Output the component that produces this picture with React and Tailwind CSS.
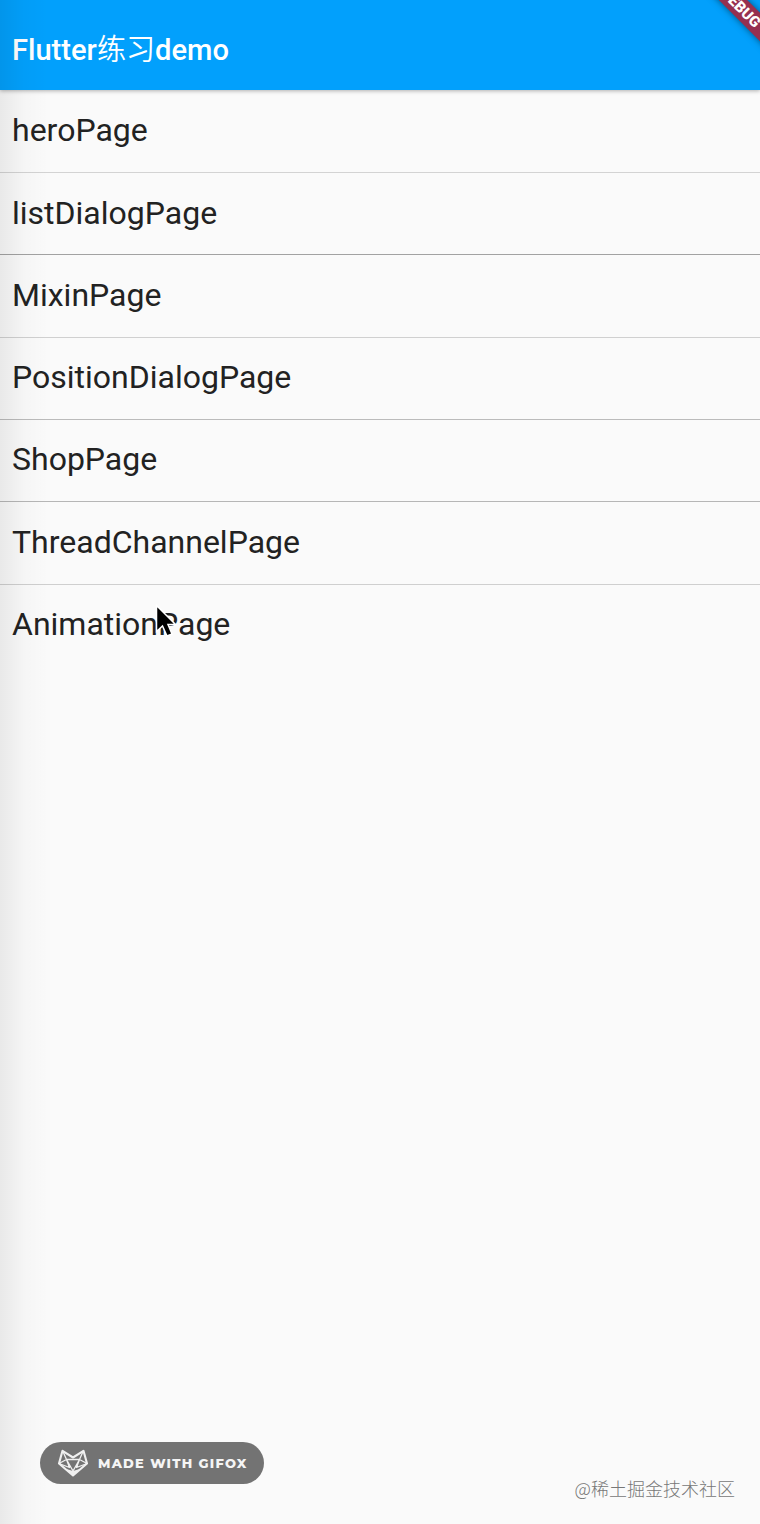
const rows = [
  { name: 'heroPage', box: 'h-[82px] border-[#d3d3d3] pt-[20px]' },
  { name: 'listDialogPage', box: 'h-[82px] border-[#a2a2a2] pt-[21px]' },
  { name: 'MixinPage', box: 'h-[83px] border-[#d0d0d0] pt-[21px]' },
  { name: 'PositionDialogPage', box: 'h-[82px] border-[#bbbbbb] pt-[20px]' },
  { name: 'ShopPage', box: 'h-[82px] border-[#b6b6b6] pt-[20px]' },
  { name: 'ThreadChannelPage', box: 'h-[83px] border-[#cfcfcf] pt-[21px]' },
  { name: 'AnimationPage', box: 'h-[82px] border-transparent pt-[20px]' },
];

function DebugBanner() {
  return (
    <div className="absolute top-0 right-0 h-[60px] w-[60px] overflow-hidden">
      <div className="absolute top-[-1px] left-[-18px] flex h-[20px] w-[120px] rotate-45 items-center justify-center bg-[#963050] pr-[3px] text-[15px] leading-none font-black text-white shadow-[0_0_7px_rgba(0,0,0,0.5)]">
        DEBUG
      </div>
    </div>
  );
}

function FoxIcon() {
  return (
    <svg className="h-[28px] w-[32px]" viewBox="0 0 32 28" fill="none" stroke="#f0f0f0" strokeWidth="2.1" strokeLinejoin="round">
      <path d="M5.5 1.8 16 8.5 26.500 1.800 30 14.500 16 26.500 2 14.500Z" />
      <path d="M5.500 1.500 9.500 10.500 22.500 10.500 26.500 1.500M9.500 10.500 2 14.500 12.500 18.500 9.500 10.500M22.500 10.500 30 14.500 19.500 18.500 22.500 10.500M9.500 10.500 16 22 22.500 10.500" strokeWidth="1.300" />
      <path d="M9.500 20 16 22 22.500 20 16 27Z" fill="#f0f0f0" stroke="none" />
    </svg>
  );
}

export default function App() {
  return (
    <div className="relative flex h-[1524px] w-[760px] flex-col overflow-hidden bg-[#fafafa] font-['Roboto','Noto_Sans_CJK_SC',sans-serif]">
      <header className="relative h-[90px] shrink-0 bg-[#02a0fc] px-3 pt-[31px] shadow-[0_1px_4px_rgba(0,0,0,0.3)]">
        <h1 className="text-[29.1px] leading-[33px] font-medium whitespace-nowrap text-white">
          Flutter<span className="font-['Noto_Sans_CJK_SC'] font-[350]">练习</span>demo
        </h1>
        <DebugBanner />
      </header>
      <main className="flex flex-col pt-px">
        {rows.map((row) => (
          <div key={row.name} className={`${row.box} border-b px-3 text-[32px] leading-[38px] whitespace-nowrap text-[#222222]`}>
            {row.name}
          </div>
        ))}
      </main>
      <footer className="mt-auto flex items-end justify-between pr-[25px] pb-[23px] pl-10">
        <div className="mb-[17px] flex h-[42px] w-[224px] items-center rounded-full bg-[#737373] pl-[17px]">
          <FoxIcon />
          <span className="ml-[9px] pt-px font-['Montserrat','Open_Sans',sans-serif] text-[13px] font-extrabold tracking-[1.25px] whitespace-nowrap text-[#f5f5f5]">MADE WITH GIFOX</span>
        </div>
        <span className="font-['Noto_Sans_CJK_SC',sans-serif] text-[18px] leading-[26px] font-light whitespace-nowrap text-[#777777]">@稀土掘金技术社区</span>
      </footer>
      <div className="pointer-events-none absolute inset-y-0 left-0 w-[48px] bg-linear-to-r from-black/7 via-black/2 to-transparent" />
      <svg className="absolute top-[603px] left-[154px] h-[36px] w-[28px]" viewBox="0 0 28 36">
        <path d="M2.500 2.500V28.500L8.500 23 13 33 18 31 14 21.500H21.500Z" fill="#000" stroke="#fff" strokeWidth="1.500" />
      </svg>
    </div>
  );
}
